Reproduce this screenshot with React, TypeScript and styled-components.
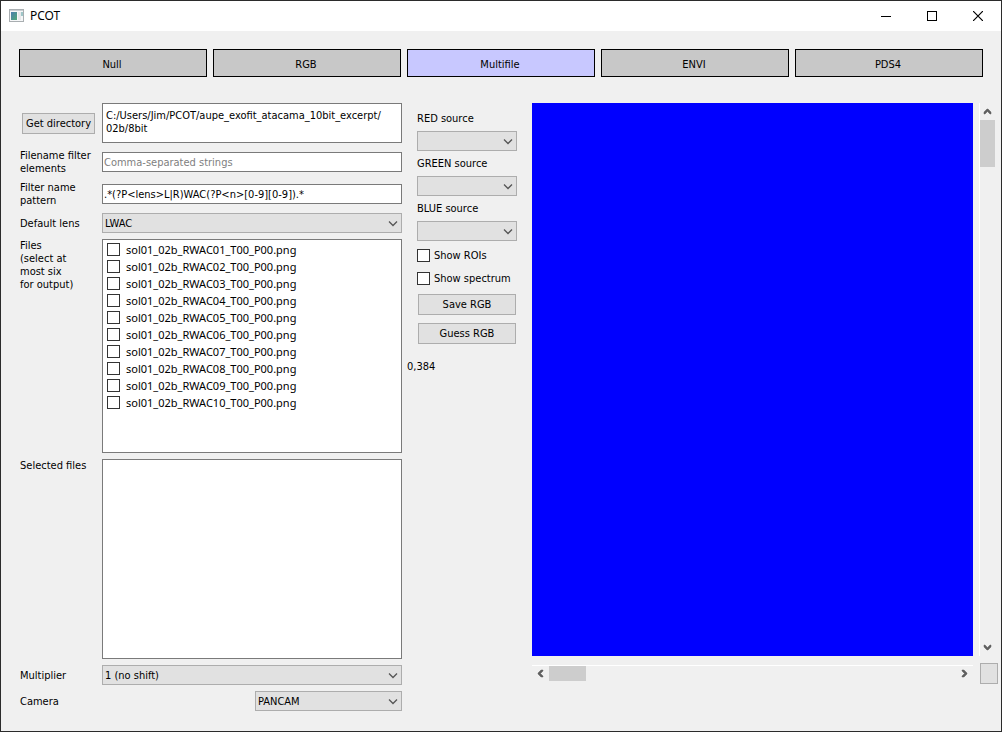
import React, { useState } from 'react';
import styled, { createGlobalStyle, css } from 'styled-components';

const Global = createGlobalStyle`
  *, *::before, *::after { box-sizing: border-box; }
  body { margin: 0; background: #f0f0f0; }
  body, button, input, select, textarea {
    font-family: "DejaVu Sans Condensed", "Noto Sans", sans-serif;
    font-size: 11px;
    line-height: 13px;
    color: #000;
  }
  button, input, select, textarea { margin: 0; border-radius: 0; outline: none; }
`;

const Window = styled.div`
  display: flex;
  flex-direction: column;
  min-height: 100vh;
  border: 1px solid #2b2b2b;
  background: #f0f0f0;
`;

const TitleBar = styled.header`
  display: flex;
  align-items: center;
  height: 30px;
  padding-left: 8px;
  background: #fff;
`;

const Title = styled.h1`
  flex: 1;
  margin: 0 0 0 5px;
  font-family: "Noto Sans", "Open Sans", sans-serif;
  font-size: 12px;
  line-height: 16px;
  font-weight: 400;
`;

const CaptionButton = styled.button`
  display: flex;
  align-items: center;
  justify-content: center;
  width: 46px;
  height: 30px;
  padding: 0;
  border: 0;
  background: transparent;
`;

const Tabs = styled.nav`
  display: flex;
  gap: 6px;
  padding: 18px 18px 0;
`;

const Tab = styled.button<{ $active: boolean }>`
  flex: 1;
  height: 28px;
  padding: 2px 2px 0 0;
  border: 1px solid #000;
  background: ${(p) => (p.$active ? '#c8c8ff' : '#c8c8c8')};
`;

const Content = styled.main`
  flex: 1;
  display: grid;
  grid-template-columns: 382px 120px 1fr;
  gap: 5px;
  padding: 26px 3px 20px 19px;
`;

const Form = styled.form`
  display: grid;
  grid-template-columns: 76px 1fr;
  grid-template-rows: 40px 26px 26px 20px 214px 1fr 20px 20px;
  gap: 6px;
  align-items: center;
`;

const Label = styled.label<{ $top?: boolean }>`
  align-self: ${(p) => (p.$top ? 'start' : 'center')};
  white-space: pre-line;
`;

const PushButton = styled.button`
  height: 21px;
  padding: 0 3px;
  border: 1px solid #adadad;
  background: #e1e1e1;
  white-space: nowrap;
`;

const DirectoryButton = styled(PushButton)`
  margin: 0 1px 0 2px;
`;

const field = css`
  width: 100%;
  border: 1px solid #7a7a7a;
  background: #fff;
`;

const PathBox = styled.textarea`
  ${field}
  height: 40px;
  padding: 5px 3px;
  resize: none;
  overflow: hidden;
`;

const TextBox = styled.input`
  ${field}
  height: 20px;
  padding: 1px 1px 0;
  &::placeholder { color: #808080; opacity: 1; }
`;

const ListBox = styled.ul`
  ${field}
  align-self: stretch;
  margin: 0;
  padding: 1px 4px;
  list-style: none;
`;

const FileLabel = styled.label`
  display: flex;
  align-items: center;
  gap: 6px;
  height: 17px;
  font-family: "Noto Sans", "Open Sans", sans-serif;
  line-height: 17px;
`;

const Check = styled.input.attrs({ type: 'checkbox' })`
  appearance: none;
  width: 13px;
  height: 13px;
  border: 1px solid #333;
  background: #fff;
  &:checked { box-shadow: inset 0 0 0 2px #fff; background: #333; }
`;

const Combo = styled.div<{ $short?: boolean }>`
  position: relative;
  justify-self: ${(p) => (p.$short ? 'end' : 'stretch')};
  width: ${(p) => (p.$short ? '147px' : 'auto')};
  height: 20px;
`;

const ComboSelect = styled.select`
  appearance: none;
  width: 100%;
  height: 20px;
  padding: 1px 20px 0 2px;
  border: 1px solid #adadad;
  background: #e1e1e1;
`;

const ComboArrow = styled.svg`
  position: absolute;
  right: 4px;
  top: 7px;
  pointer-events: none;
`;

const Controls = styled.section`
  display: flex;
  flex-direction: column;
  gap: 6px;
  padding: 9px 10px 0;
`;

const CheckLabel = styled.label`
  display: flex;
  align-items: center;
  gap: 4px;
  height: 17px;
  white-space: nowrap;
`;

const ControlButton = styled(PushButton)`
  margin: 1px;
`;

const Position = styled.output`
  margin: 9px 0 0 -10px;
`;

const Viewer = styled.section`
  display: grid;
  grid-template-columns: 1fr 19px;
  grid-template-rows: 1fr 21px;
  gap: 7px 6px;
  padding-bottom: 27px;
`;

const Canvas = styled.canvas`
  width: 100%;
  height: 100%;
  background: #00f;
`;

const ScrollBar = styled.div<{ $vertical?: boolean }>`
  display: flex;
  flex-direction: ${(p) => (p.$vertical ? 'column' : 'row')};
  ${(p) =>
    p.$vertical
      ? 'width: 16px; border-left: 1px solid #fff;'
      : 'height: 16px; margin-top: 2px; border-top: 1px solid #fff;'}
`;

const ScrollTrack = styled.div<{ $vertical?: boolean }>`
  flex: 1;
  display: flex;
  flex-direction: ${(p) => (p.$vertical ? 'column' : 'row')};
`;

const ScrollThumb = styled.div<{ $length: number }>`
  flex: 0 0 ${(p) => p.$length}px;
  background: #cdcdcd;
`;

const ScrollButton = styled.button`
  display: flex;
  align-items: center;
  justify-content: center;
  flex: 0 0 17px;
  padding: 0;
  border: 0;
  background: transparent;
`;

const CornerButton = styled(PushButton)`
  width: 18px;
  margin-left: 1px;
`;

function AppIcon() {
  return (
    <svg width="16" height="14" viewBox="0 0 16 14" aria-hidden="true">
      <defs>
        <linearGradient id="pane" x1="0" y1="0" x2="1" y2="1">
          <stop offset="0" stopColor="#4a7dae" />
          <stop offset="1" stopColor="#4fa876" />
        </linearGradient>
      </defs>
      <rect x="0.5" y="0.5" width="14" height="12" fill="#f6f7f8" stroke="#a9aeb1" />
      <path d="M1 1.5h13" stroke="#c9ced2" />
      <rect x="2" y="3" width="6" height="8" fill="url(#pane)" />
      <rect x="9" y="3" width="3" height="8" fill="#e6e8ea" />
      <rect x="12" y="3" width="2" height="4" fill="#9fc6c8" />
    </svg>
  );
}

const arrowTurns = { up: 0, right: 90, down: 180, left: 270 };

function ScrollArrow({ to }: { to: keyof typeof arrowTurns }) {
  return (
    <svg width="9" height="9" viewBox="0 0 9 9" aria-hidden="true">
      <path
        d="M4 2H5L8 5V7H7L4.5 4.5L2 7H1V5Z"
        fill="#606060"
        stroke="#606060"
        strokeWidth="0.5"
        transform={`rotate(${arrowTurns[to]} 4.5 4.5)`}
      />
    </svg>
  );
}

function ComboBox({ id, options, short }: { id: string; options: string[]; short?: boolean }) {
  return (
    <Combo $short={short}>
      <ComboSelect id={id}>
        {options.map((o) => (
          <option key={o}>{o}</option>
        ))}
      </ComboSelect>
      <ComboArrow width="10" height="7" viewBox="0 0 10 7" aria-hidden="true">
        <path d="M1 1.5L5 5.5L9 1.5" fill="none" stroke="#555" strokeWidth="1.3" />
      </ComboArrow>
    </Combo>
  );
}

const tabs = ['Null', 'RGB', 'Multifile', 'ENVI', 'PDS4'];
const files = Array.from(
  { length: 10 },
  (_, i) => `sol01_02b_RWAC${String(i + 1).padStart(2, '0')}_T00_P00.png`,
);
const sources = ['RED', 'GREEN', 'BLUE'];

export default function App() {
  const [active, setActive] = useState('Multifile');

  return (
    <>
      <Global />
      <Window>
        <TitleBar>
          <AppIcon />
          <Title>PCOT</Title>
          <CaptionButton aria-label="Minimize">
            <svg width="10" height="10" viewBox="0 0 10 10">
              <path d="M0 5.5h10" stroke="#000" />
            </svg>
          </CaptionButton>
          <CaptionButton aria-label="Maximize">
            <svg width="10" height="10" viewBox="0 0 10 10">
              <rect x="0.5" y="0.5" width="9" height="9" fill="none" stroke="#000" />
            </svg>
          </CaptionButton>
          <CaptionButton aria-label="Close">
            <svg width="10" height="10" viewBox="0 0 10 10">
              <path d="M0 0L10 10M10 0L0 10" stroke="#000" strokeWidth="1.2" />
            </svg>
          </CaptionButton>
        </TitleBar>

        <Tabs>
          {tabs.map((t) => (
            <Tab key={t} $active={t === active} onClick={() => setActive(t)}>
              {t}
            </Tab>
          ))}
        </Tabs>

        <Content>
          <Form onSubmit={(e) => e.preventDefault()}>
            <DirectoryButton type="button">Get directory</DirectoryButton>
            <PathBox
              aria-label="Directory"
              readOnly
              value={'C:/Users/Jim/PCOT/aupe_exofit_atacama_10bit_excerpt/\n02b/8bit'}
            />

            <Label htmlFor="filter">{'Filename filter\nelements'}</Label>
            <TextBox id="filter" placeholder="Comma-separated strings" />

            <Label htmlFor="pattern">{'Filter name\npattern'}</Label>
            <TextBox id="pattern" defaultValue=".*(?P<lens>L|R)WAC(?P<n>[0-9][0-9]).*" />

            <Label htmlFor="lens">Default lens</Label>
            <ComboBox id="lens" options={['LWAC']} />

            <Label as="span" id="files-label" $top>
              {'Files\n(select at\nmost six\nfor output)'}
            </Label>
            <ListBox aria-labelledby="files-label">
              {files.map((f) => (
                <li key={f}>
                  <FileLabel>
                    <Check />
                    {f}
                  </FileLabel>
                </li>
              ))}
            </ListBox>

            <Label as="span" id="selected-label" $top>
              Selected files
            </Label>
            <ListBox aria-labelledby="selected-label" />

            <Label htmlFor="multiplier">Multiplier</Label>
            <ComboBox id="multiplier" options={['1 (no shift)']} />

            <Label htmlFor="camera">Camera</Label>
            <ComboBox id="camera" options={['PANCAM']} short />
          </Form>

          <Controls>
            {sources.map((s) => (
              <React.Fragment key={s}>
                <Label htmlFor={s} $top>{`${s} source`}</Label>
                <ComboBox id={s} options={['']} />
              </React.Fragment>
            ))}
            <CheckLabel>
              <Check />
              Show ROIs
            </CheckLabel>
            <CheckLabel>
              <Check />
              Show spectrum
            </CheckLabel>
            <ControlButton>Save RGB</ControlButton>
            <ControlButton>Guess RGB</ControlButton>
            <Position>0,384</Position>
          </Controls>

          <Viewer>
            <Canvas />
            <ScrollBar $vertical>
              <ScrollButton aria-label="Scroll up">
                <ScrollArrow to="up" />
              </ScrollButton>
              <ScrollTrack $vertical>
                <ScrollThumb $length={47} />
              </ScrollTrack>
              <ScrollButton aria-label="Scroll down">
                <ScrollArrow to="down" />
              </ScrollButton>
            </ScrollBar>
            <ScrollBar>
              <ScrollButton aria-label="Scroll left">
                <ScrollArrow to="left" />
              </ScrollButton>
              <ScrollTrack>
                <ScrollThumb $length={37} />
              </ScrollTrack>
              <ScrollButton aria-label="Scroll right">
                <ScrollArrow to="right" />
              </ScrollButton>
            </ScrollBar>
            <CornerButton aria-label="Reset view" />
          </Viewer>
        </Content>
      </Window>
    </>
  );
}
